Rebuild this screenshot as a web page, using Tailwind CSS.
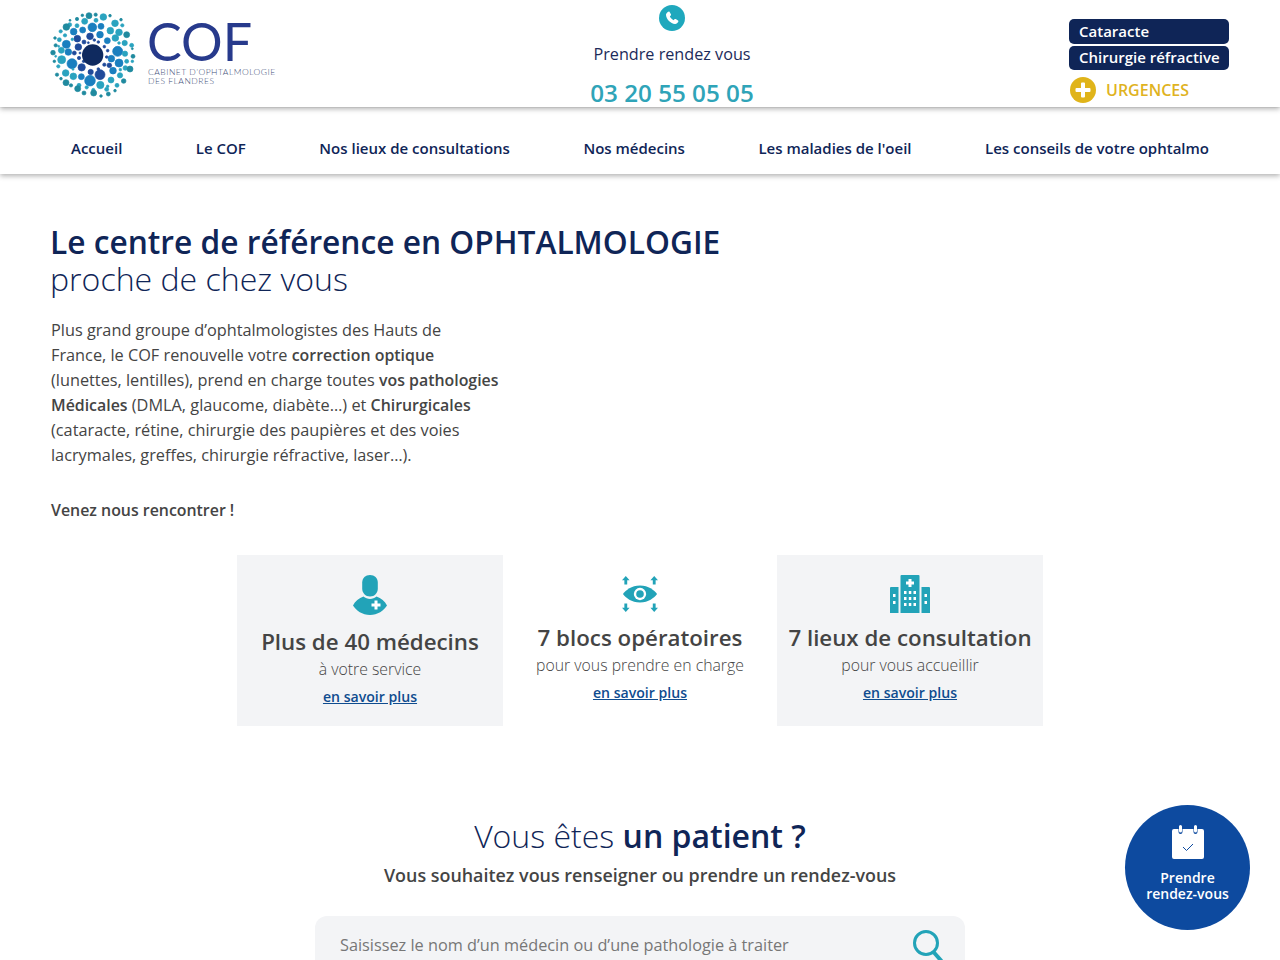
<!DOCTYPE html>
<html lang="fr">
<head>
    <meta charset="UTF-8">
    <meta name="viewport" content="width=device-width, initial-scale=1.0">
    <title>COF - Cabinet d'ophtalmologie des Flandres</title>
    <script src="https://cdn.jsdelivr.net/npm/@tailwindcss/browser@4"></script>
</head>
<body class="relative h-[960px] overflow-hidden bg-white font-['Open_Sans',sans-serif] text-[#444444]">
    <!-- Top header -->
    <header class="relative z-20 flex h-[107px] bg-white pl-[51px] pr-[51px] shadow-[0_2px_5px_rgba(0,0,0,0.3)]">
        <div class="flex w-[521px] shrink-0 items-start pt-[13px]">
            <svg class="-ml-[6px] -mt-[5px] h-[95px] w-[95px] shrink-0" viewBox="0 0 285 285">
                <g fill="#1a7fbf" stroke="#1a7fbf" stroke-width="2">
                    <circle cx="135" cy="218" r="16"/><circle cx="218" cy="130" r="15"/><circle cx="81" cy="167" r="15"/>
                    <circle cx="222" cy="165" r="12"/><circle cx="64" cy="109" r="12"/><circle cx="142" cy="58" r="13"/>
                    <circle cx="187" cy="98" r="9"/><circle cx="165" cy="80" r="10"/><circle cx="199" cy="152" r="10"/>
                    <circle cx="204" cy="188" r="10"/><circle cx="86" cy="71" r="10"/><circle cx="113" cy="66" r="9"/>
                    <circle cx="70" cy="132" r="10"/><circle cx="168" cy="55" r="9"/><circle cx="109" cy="206" r="9"/>
                </g>
                <g fill="#1f4a9a" stroke="#1f4a9a" stroke-width="2">
                    <circle cx="165" cy="200" r="15"/><circle cx="110" cy="178" r="11"/><circle cx="97" cy="92" r="10"/>
                    <circle cx="100" cy="117" r="10"/><circle cx="135" cy="85" r="10"/><circle cx="137" cy="192" r="8"/>
                    <circle cx="193" cy="172" r="7"/><circle cx="117" cy="102" r="6"/><circle cx="88" cy="135" r="6"/>
                    <circle cx="160" cy="102" r="4"/><circle cx="148" cy="96" r="4"/><circle cx="178" cy="116" r="4"/>
                    <circle cx="188" cy="128" r="4"/><circle cx="185" cy="147" r="4"/><circle cx="178" cy="170" r="5"/>
                    <circle cx="160" cy="183" r="4"/><circle cx="102" cy="150" r="5"/><circle cx="105" cy="135" r="3"/>
                    <circle cx="130" cy="104" r="3"/><circle cx="116" cy="160" r="4"/>
                </g>
                <g fill="#2aa3bf" stroke="#2aa3bf" stroke-width="2">
                    <circle cx="196" cy="68" r="10"/><circle cx="222" cy="73" r="10"/><circle cx="210" cy="46" r="10"/>
                    <circle cx="175" cy="27" r="10"/><circle cx="119" cy="40" r="9"/><circle cx="49" cy="127" r="9"/>
                    <circle cx="50" cy="155" r="12"/><circle cx="62" cy="195" r="10"/><circle cx="85" cy="205" r="10"/>
                    <circle cx="166" cy="231" r="11"/><circle cx="198" cy="216" r="9"/><circle cx="225" cy="202" r="8"/>
                    <circle cx="239" cy="105" r="8"/><circle cx="211" cy="90" r="10"/><circle cx="240" cy="137" r="8"/>
                    <circle cx="245" cy="160" r="6"/><circle cx="241" cy="180" r="7"/><circle cx="43" cy="95" r="6"/>
                    <circle cx="74" cy="50" r="6"/><circle cx="96" cy="53" r="6"/><circle cx="153" cy="37" r="6"/>
                    <circle cx="40" cy="175" r="5"/><circle cx="102" cy="232" r="6"/><circle cx="216" cy="232" r="6"/>
                    <circle cx="232" cy="52" r="5"/><circle cx="260" cy="112" r="6"/><circle cx="262" cy="160" r="4"/>
                    <circle cx="145" cy="246" r="5"/><circle cx="185" cy="244" r="6"/><circle cx="47" cy="70" r="5"/>
                    <circle cx="41" cy="115" r="3"/><circle cx="32" cy="145" r="3"/><circle cx="82" cy="94" r="4"/>
                    <circle cx="60" cy="82" r="5"/><circle cx="222" cy="105" r="4"/><circle cx="226" cy="185" r="4"/>
                    <circle cx="188" cy="235" r="4"/><circle cx="125" cy="238" r="5"/><circle cx="84" cy="184" r="3"/>
                </g>
                <g fill="#1f8a9f" stroke="#1f8a9f" stroke-width="2">
                    <circle cx="132" cy="23" r="9"/><circle cx="152" cy="20" r="5"/><circle cx="64" cy="57" r="10"/>
                    <circle cx="245" cy="80" r="9"/><circle cx="255" cy="183" r="9"/><circle cx="24" cy="134" r="7"/>
                    <circle cx="63" cy="224" r="9"/><circle cx="98" cy="242" r="9"/><circle cx="146" cy="255" r="9"/>
                    <circle cx="236" cy="219" r="7"/><circle cx="264" cy="145" r="6"/><circle cx="32" cy="112" r="5"/>
                    <circle cx="96" cy="33" r="5"/><circle cx="78" cy="232" r="5"/><circle cx="117" cy="255" r="6"/>
                    <circle cx="190" cy="258" r="6"/><circle cx="28" cy="160" r="4"/><circle cx="36" cy="200" r="5"/>
                    <circle cx="48" cy="212" r="4"/><circle cx="168" cy="264" r="4"/><circle cx="210" cy="248" r="4"/>
                    <circle cx="262" cy="122" r="3"/><circle cx="228" cy="35" r="4"/><circle cx="195" cy="23" r="4"/>
                    <circle cx="30" cy="90" r="4"/><circle cx="112" cy="22" r="4"/><circle cx="75" cy="37" r="3"/>
                </g>
                <circle cx="143" cy="141" r="32" fill="#0f2a5f"/>
            </svg>
            <div class="ml-[7px] flex flex-col pt-[6px]">
                <div class="h-[44px] font-['Lato',sans-serif] text-[52px] leading-[44px] font-normal tracking-[0px] text-[#273a8c]">COF</div>
                <div class="mt-[5px] ml-px font-['Lato',sans-serif] text-[8.5px] leading-[9px] font-light tracking-[0.5px] whitespace-nowrap text-[#3f4f78]">CABINET D’OPHTALMOLOGIE<br>DES FLANDRES</div>
            </div>
        </div>
        <div class="flex w-[200px] shrink-0 flex-col items-center pt-[5px]">
            <div class="flex h-[26px] w-[26px] shrink-0 items-center justify-center rounded-full bg-[#1fa8bd]">
                <svg class="h-[16px] w-[16px]" viewBox="0 0 24 24" fill="#ffffff"><path d="M6.6 2.500c.7-.4 1.400-.2 1.800.5l2 3.400c.4.7.3 1.400-.3 1.900L8.800 9.400c.6 2.300 3.400 5.200 5.800 5.800l1.100-1.300c.5-.6 1.200-.7 1.900-.3l3.400 2c.7.4.9 1.100.5 1.800-1 2-2.900 3.800-5 3.600C9.800 20.300 3.700 14.200 3 7.500 2.800 5.400 4.600 3.500 6.600 2.500z"/></svg>
            </div>
            <div class="mt-[11px] shrink-0 text-[16.2px] leading-[24px] text-[#1c2b5a]">Prendre rendez vous</div>
            <div class="mt-[11px] shrink-0 text-[24.2px] leading-[32px] font-semibold whitespace-nowrap text-[#2fa4b8]">03 20 55 05 05</div>
        </div>
        <div class="ml-auto flex w-[160px] flex-col pt-[19px]">
            <a class="flex h-[25px] items-center rounded-[5px] bg-[#0f2557] px-[10px] text-[15px] font-semibold whitespace-nowrap text-white">Cataracte</a>
            <a class="mt-[2px] flex h-[24px] items-center rounded-[5px] bg-[#0f2557] px-[10px] pb-[2px] text-[15px] font-semibold whitespace-nowrap text-white">Chirurgie réfractive</a>
            <div class="mt-[7px] flex items-center">
                <div class="ml-px flex h-[26px] w-[26px] items-center justify-center rounded-full bg-[#e0b41a]">
                    <svg class="h-[16px] w-[16px]" viewBox="0 0 16 16" fill="#ffffff"><path d="M6 1.500a1 1 0 0 1 1-1h2a1 1 0 0 1 1 1V6h4.500a1 1 0 0 1 1 1v2a1 1 0 0 1-1 1H10v4.500a1 1 0 0 1-1 1H7a1 1 0 0 1-1-1V10H1.500a1 1 0 0 1-1-1V7a1 1 0 0 1 1-1H6z"/></svg>
                </div>
                <span class="ml-[10px] text-[16px] font-semibold text-[#dfb31f]">URGENCES</span>
            </div>
        </div>
    </header>

    <!-- Main navigation -->
    <nav class="relative z-10 mt-px flex h-[66px] items-center justify-between bg-white px-[71px] pt-[14px] text-[15px] font-semibold text-[#0f2557] shadow-[0_2px_5px_rgba(0,0,0,0.3)]">
        <a>Accueil</a>
        <a>Le COF</a>
        <a>Nos lieux de consultations</a>
        <a>Nos médecins</a>
        <a>Les maladies de l'oeil</a>
        <a>Les conseils de votre ophtalmo</a>
    </nav>

    <main>
        <section class="px-[51px] pt-[49px]">
            <h1 class="-ml-px text-[31.7px] leading-[38px] font-semibold text-[#0f2557]">Le centre de référence en OPHTALMOLOGIE</h1>
            <h2 class="-ml-px text-[32.1px] leading-[36px] font-light text-[#0f2557]">proche de chez vous</h2>
            <p class="mt-[21px] w-[470px] text-[16.3px] leading-[25px]">Plus grand groupe d’ophtalmologistes des Hauts de<br>France, le COF renouvelle votre <b class="text-[15.9px] font-semibold">correction optique</b><br>(lunettes, lentilles), prend en charge toutes <b class="text-[15.9px] font-semibold">vos pathologies</b><br><b class="text-[15.9px] font-semibold">Médicales</b> (DMLA, glaucome, diabète…) et <b class="text-[15.9px] font-semibold">Chirurgicales</b><br>(cataracte, rétine, chirurgie des paupières et des voies<br>lacrymales, greffes, chirurgie réfractive, laser…).</p>
            <p class="mt-[30px] text-[15.9px] leading-[25px] font-semibold">Venez nous rencontrer !</p>
        </section>

        <!-- Key figures -->
        <section class="mx-auto mt-[32px] grid w-[806px] grid-cols-3 gap-[4px] text-center">
            <div class="flex h-[171px] flex-col items-center bg-[#f3f4f6] pt-[20px]">
                <svg class="h-[40px] w-[36px]" viewBox="0 0 36 40" fill="#22a3b8">
                    <path d="M18 0c4.500 0 7.800 3 7.800 7.500v6c0 4.500-3.300 8-7.800 8s-7.800-3.500-7.800-8v-6C10.200 3 13.500 0 18 0z"/>
                    <path d="M11.500 21.500c3.500 3.200 9.500 3.200 13 0 4.500 1.500 8.500 4.700 10.500 9-3 5-9.500 9.500-17 9.500S4 35.500 1 30.500c2-4.300 6-7.500 10.500-9z"/>
                    <path fill="#ffffff" d="M22.500 25.500h3v3h3v3h-3v3h-3v-3h-3v-3h3z"/>
                </svg>
                <div class="mt-[11px] text-[22.3px] leading-[32px] font-semibold">Plus de 40 médecins</div>
                <div class="text-[15.8px] leading-[22px] font-light">à votre service</div>
                <a class="mt-[6px] text-[14.1px] leading-[22px] font-semibold text-[#0f4c8f] underline">en savoir plus</a>
            </div>
            <div class="flex h-[171px] flex-col items-center pt-[20px]">
                <svg class="h-[38px] w-[36px]" viewBox="0 0 38 38" fill="#22a3b8">
                    <path d="M19 10C28 10 34 15 37 19 34 23 28 28 19 28S4 23 1 19C4 15 10 10 19 10z"/>
                    <circle cx="19" cy="19" r="6.500" fill="#ffffff"/>
                    <circle cx="19" cy="19" r="4" fill="#22a3b8"/>
                    <path d="M4 0l4 4.500H5.500V9h-3V4.500H0zM34 0l4 4.500h-2.500V9h-3V4.500H30zM2.500 29h3v4.500H8L4 38l-4-4.500h2.500zM32.500 29h3v4.500H38L34 38l-4-4.500h2.500z"/>
                </svg>
                <div class="mt-[9px] text-[22.3px] leading-[32px] font-semibold">7 blocs opératoires</div>
                <div class="text-[15.8px] leading-[22px] font-light">pour vous prendre en charge</div>
                <a class="mt-[6px] text-[14.1px] leading-[22px] font-semibold text-[#0f4c8f] underline">en savoir plus</a>
            </div>
            <div class="flex h-[171px] flex-col items-center bg-[#f3f4f6] pt-[20px]">
                <svg class="h-[38px] w-[40px]" viewBox="0 0 40 38" fill="#22a3b8">
                    <path d="M10.500 1a1 1 0 0 1 1-1h17a1 1 0 0 1 1 1v37h-19z"/>
                    <path d="M0 13a1 1 0 0 1 1-1h7.500v26H0zM31.500 12H39a1 1 0 0 1 1 1v25h-8.500z"/>
                    <path fill="#ffffff" d="M18.500 4h3v2.500H24v3h-2.500V12h-3V9.500H16v-3h2.500zM14 16h2.500v3H14zM18.800 16h2.500v3h-2.500zM23.500 16H26v3h-2.500zM14 22h2.500v3H14zM18.800 22h2.500v3h-2.500zM23.500 22H26v3h-2.500zM14 28h2.500v3H14zM18.800 28h2.500v3h-2.500zM23.500 28H26v3h-2.500zM3 19h2.500v3H3zM3 26h2.500v3H3zM34.500 19H37v3h-2.500zM34.500 26H37v3h-2.500z"/>
                </svg>
                <div class="mt-[9px] text-[22.3px] leading-[32px] font-semibold">7 lieux de consultation</div>
                <div class="text-[15.8px] leading-[22px] font-light">pour vous accueillir</div>
                <a class="mt-[6px] text-[14.1px] leading-[22px] font-semibold text-[#0f4c8f] underline">en savoir plus</a>
            </div>
        </section>

        <!-- Patient search -->
        <section class="mt-[89px] flex flex-col items-center">
            <h2 class="text-[32px] leading-[42px] font-light text-[#0f2557]">Vous êtes <b class="font-semibold">un patient ?</b></h2>
            <p class="mt-[5px] text-[17.9px] leading-[26px] font-semibold">Vous souhaitez vous renseigner ou prendre un rendez-vous</p>
            <div class="mt-[28px] flex h-[58px] w-[650px] items-start justify-between rounded-[12px] bg-[#f3f4f6] pr-[22px] pl-[25px]">
                <span class="mt-[17px] text-[16.3px] leading-[24px] text-[#777777]">Saisissez le nom d’un médecin ou d’une pathologie à traiter</span>
                <svg class="mt-[14px] h-[32px] w-[30px] shrink-0" viewBox="0 0 30 32" fill="none" stroke="#22a3b8" stroke-width="3"><circle cx="13" cy="13" r="11.500"/><path d="M20.500 22l8 9" stroke-width="4"/></svg>
            </div>
        </section>
    </main>

    <!-- Floating appointment button -->
    <a class="absolute top-[805px] left-[1125px] z-30 flex h-[125px] w-[125px] flex-col items-center rounded-full bg-[#0d4a9f] pt-[20px] text-center text-[14px] leading-[16px] font-semibold text-white">
        <svg class="h-[34px] w-[32px]" viewBox="0 0 32 34">
            <path fill="#ffffff" d="M2 4h4.500v3a2 2 0 0 0 4 0V4h11v3a2 2 0 0 0 4 0V4H30a2 2 0 0 1 2 2v26a2 2 0 0 1-2 2H2a2 2 0 0 1-2-2V6a2 2 0 0 1 2-2z"/>
            <path fill="#ffffff" d="M7 1.500a1.500 1.500 0 0 1 3 0V6a1.500 1.500 0 0 1-3 0zM22 1.500a1.500 1.500 0 0 1 3 0V6a1.500 1.500 0 0 1-3 0z"/>
            <path fill="none" stroke="#0d4a9f" stroke-width="1" d="M11 22l3.500 3.500L21 19"/>
        </svg>
        <span class="mt-[11px]">Prendre<br>rendez-vous</span>
    </a>
</body>
</html>
